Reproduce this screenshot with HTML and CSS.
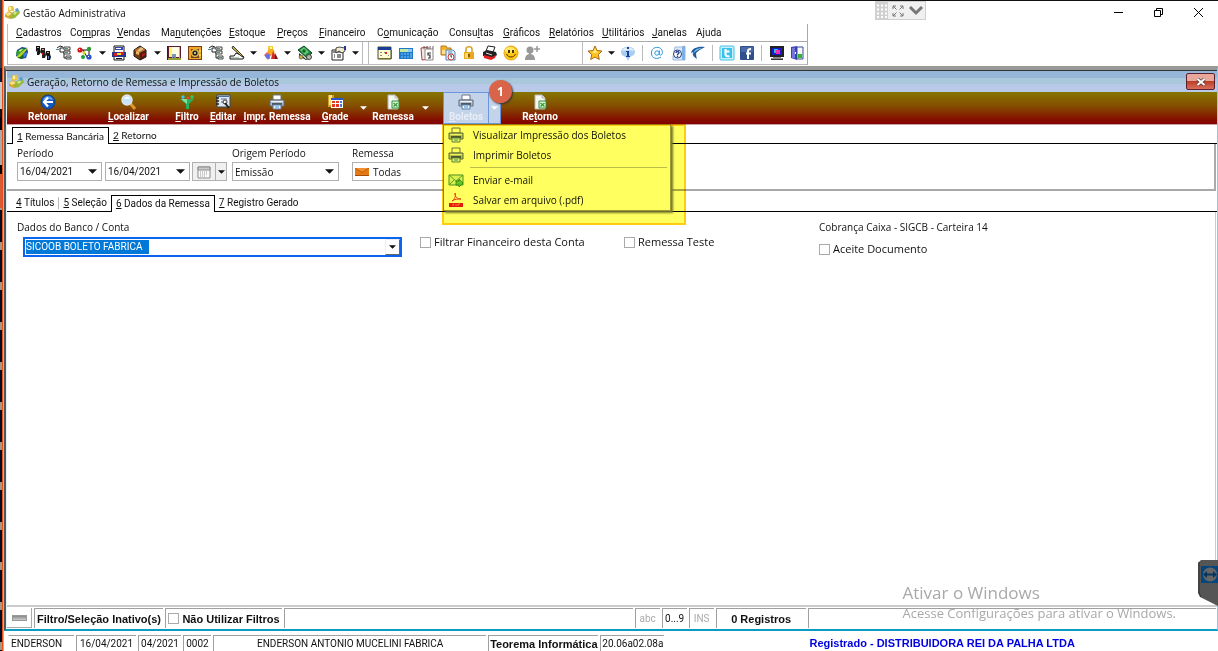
FILE: index.html
```html
<!DOCTYPE html>
<html lang="pt-BR">
<head>
<meta charset="utf-8">
<title>Gestão Administrativa</title>
<link rel="stylesheet" href="styles.css">
</head>
<body>
<svg class="sprite" aria-hidden="true">
  <symbol id="logo" viewBox="0 0 16 16"><path d="M5 1h4l1 2v3H4V3z" fill="#e8c648"/><path d="M5 2h2v3H5z" fill="#fff3b0"/><path d="M1 9l4-3 4 2 1 4-4 2-5-2z" fill="#d9a62b"/><path d="M1 9l4-2 3 2-4 2z" fill="#f8e08a"/><path d="M6 11l3-4 6-2 1 3-5 5-4 1z" fill="#9ab83a"/><path d="M9 8l5-2-3 4z" fill="#d8ec8c"/><path d="M11 4l3-1 1 3-3 1z" fill="#5c9ec8"/></symbol>
  <symbol id="down" viewBox="0 0 8 4"><path d="M0 0h8L4 4z" fill="currentColor"/></symbol>
  <symbol id="globe" viewBox="0 0 16 16"><path d="M3 5l5-3 5 1 1 4-2 6-5 1-5-3z" fill="#123c96"/><path d="M2 7l6-4 5 2-5 4-5 2z" fill="#34a02c"/><path d="M3 11l5-3 4 2-4 4-4-1z" fill="#1c6b2c"/><path d="M2 12l8-7 4-3-3 5-5 5z" fill="#b6d82a"/><path d="M9 9l4-2v3l-3 3z" fill="#3f7be0"/><path d="M5 5l4-1-3 3z" fill="#e7f7a8"/></symbol>
  <symbol id="people" viewBox="0 0 16 16"><path d="M1 1h4v3l1 3-2 3H2V7L1 6z" fill="#111"/><path d="M6 3h4v3l1 4-1 3H7V9L6 8z" fill="#222"/><path d="M11 6h4v3l1 3-1 3h-3v-4l-1-1z" fill="#111"/><path d="M2 2h2v1H2zM7 4h2v1H7zM12 7h2v1h-2z" fill="#d9a78a"/><path d="M2 5h1v2H2zM7 8h1v2H7z" fill="#c01414"/><path d="M13 11h1v3h-1z" fill="#5b79c4"/></symbol>
  <symbol id="tree" viewBox="0 0 16 16"><path d="M1 3l3-2 3 1M4 3v4h4M8 7v6h3M4 3h4" fill="none" stroke="#222"/><path d="M8 2h6v3H8zM8 6h6v3H8zM10 11h5v3h-5z" fill="#f1f1df" stroke="#333" stroke-width=".9"/><path d="M0 4h3v1H0zM9 3h3v1H9zM9 7h3v1H9zM11 12h3v1h-3z" fill="#4c8a9a"/></symbol>
  <symbol id="flow" viewBox="0 0 16 16"><path d="M3 5h9M6 5l4 7M10 12h3M12 5v5" fill="none" stroke="#111"/><circle cx="3" cy="5" r="2.600" fill="#d81818"/><circle cx="12" cy="4" r="2.200" fill="#2c9c30"/><circle cx="7" cy="8" r="1.700" fill="#dbd024"/><circle cx="12" cy="12" r="2.600" fill="#2d52d0"/><circle cx="6" cy="12" r="2" fill="#159f35"/><path d="M2 4h1v1H2zM11 11h1v1h-1z" fill="#fff"/></symbol>
  <symbol id="calc" viewBox="0 0 16 16"><path d="M3 1h10v14H3z" fill="#fff" stroke="#111"/><path d="M4 2h8v3H4z" fill="#3a48ad"/><path d="M5 3h5v1H5z" fill="#fff"/><path d="M1 7h14v5H1z" fill="#2a3590"/><path d="M3 8h3v3H3zM9 7h4v3H9z" fill="#d32020"/><path d="M6 8h4v2H6z" fill="#f5e22d"/><path d="M5 13h6v1H5z" fill="#111"/></symbol>
  <symbol id="box" viewBox="0 0 16 16"><path d="M2 5l6-4 6 4v7l-6 3-6-4z" fill="#7a3b13" stroke="#111"/><path d="M2 5l6-3 6 3-6 3z" fill="#b86a28"/><path d="M8 8l6-3v6l-6 4z" fill="#4b1e0b"/><path d="M4 6l3 1v3L4 9z" fill="#f0b45c"/><path d="M9 2l3 2-5 3-2-1z" fill="#e4c083"/><path d="M10 9l3-1v2l-3 2z" fill="#b01a1a"/></symbol>
  <symbol id="book" viewBox="0 0 16 16"><path d="M1 1h14v14H1z" fill="#5d1a3a"/><path d="M3 2h3v10H3z" fill="#fff36a"/><path d="M6 2h7v10H6z" fill="#fffde0"/><path d="M1 13h14v2H1z" fill="#94a030"/><path d="M1 1h1v14H1z" fill="#222"/><path d="M6 9h4v5L8 12l-2 2z" fill="#7c95bb"/><path d="M13 2h1v11h-1z" fill="#b5c060"/></symbol>
  <symbol id="safe" viewBox="0 0 16 16"><path d="M1 1h14v14H1z" fill="#7a3a1c"/><path d="M2 2h12v12H2z" fill="#f0a820"/><path d="M4 4h8v9H4z" fill="#6a4420"/><circle cx="8" cy="8" r="4" fill="#e9ba45"/><circle cx="8" cy="8" r="2.600" fill="#222"/><circle cx="8" cy="8" r="1" fill="#f7e7b0"/><path d="M12 5h2v2h-2zM12 9h2v2h-2z" fill="#f5d33e"/></symbol>
  <symbol id="sign" viewBox="0 0 16 16"><path d="M1 11h4l2-3 5 2 3 2-1 2H1z" fill="#fff" stroke="#111"/><path d="M4 1l9 9 1 2-2-1-9-8z" fill="#d1b54f" stroke="#111" stroke-width=".8"/><path d="M2 13h8" stroke="#79986a"/></symbol>
  <symbol id="shapes" viewBox="0 0 16 16"><path d="M5 1h5v5H5z" fill="#f3cf30"/><circle cx="8" cy="7" r="3.500" fill="#f6ad24"/><path d="M10 6l4 8H8z" fill="#d22727"/><path d="M1 10l3-3 4 3-3 5z" fill="#e46a65"/><path d="M2 10l4-1 1 5-4-1z" fill="#5a76e2"/><path d="M12 8l3 6h-3z" fill="#6b1414"/><path d="M7 2h2v2H7z" fill="#fff4ad"/></symbol>
  <symbol id="money" viewBox="0 0 16 16"><path d="M1 5l6-4 8 7-5 5z" fill="#1c8338" stroke="#0b4820"/><path d="M3 5l4-3 5 5-4 3z" fill="#5fca76"/><circle cx="7" cy="6" r="1.700" fill="#116427"/><path d="M2 8l7 6 5-3v2l-5 2-7-4z" fill="#123b25"/><circle cx="12" cy="12" r="2.500" fill="#b6b8b0" stroke="#444"/><circle cx="4" cy="12" r="2" fill="#c9b13b" stroke="#444" stroke-width=".6"/></symbol>
  <symbol id="prop" viewBox="0 0 16 16"><path d="M1 5h11v10H1z" fill="#fff" stroke="#222"/><path d="M2 6h9v2H2z" fill="#888"/><path d="M3 10h1M3 12h1M6 10h4M6 12h4" stroke="#111"/><path d="M5 3l3-1 6 1v3l-3 2-3-2-3 2z" fill="#f4ecd2" stroke="#222" stroke-width=".8"/><path d="M13 1h2v4h-2z" fill="#24389c"/></symbol>
  <symbol id="agenda" viewBox="0 0 16 16"><path d="M1 2h13v12H1z" fill="#fffbd0" stroke="#4c4926"/><path d="M1 2h13v3H1z" fill="#1c3e92"/><path d="M3 7h2v1H3zM7 7h2v1H7zM3 10h2v1H3zM11 10h1v1h-1z" fill="#888"/><path d="M8 7h2v2H8z" fill="#d42828"/><path d="M2 13h13v1H2zM14 5h1v9h-1z" fill="#706c27"/></symbol>
  <symbol id="calc2" viewBox="0 0 16 16"><path d="M1 3h14v11H1z" fill="#1d79c9"/><path d="M2 4h12v3H2z" fill="#c3e6a3"/><path d="M10 4h4v3h-4z" fill="#8fcbef"/><path d="M3 8h2v2H3zM6 8h2v2H6zM9 8h2v2H9zM3 11h2v2H3zM6 11h2v2H6zM9 11h2v2H9zM12 8h2v5h-2z" fill="#4ca0e4"/></symbol>
  <symbol id="notes" viewBox="0 0 16 16"><path d="M2 3l7-1 1 12-7 1z" fill="#f5e8e4" stroke="#a8433c"/><path d="M6 4h8v11H6z" fill="#fff" stroke="#888"/><path d="M5 1v3M8 1v3M11 1v3M14 1v3" stroke="#666"/><path d="M12 8H9v2h2v3H9" fill="none" stroke="#333" stroke-width="1.200"/></symbol>
  <symbol id="sched" viewBox="0 0 16 16"><path d="M1 1h5l1 2h4v7H1z" fill="#f3b42b" stroke="#b67b14"/><path d="M2 5h9v4H2z" fill="#ffe08a"/><path d="M6 5h7l2 2v8H6z" fill="#e6effb" stroke="#5a84bb"/><path d="M8 7h4M8 9h5" stroke="#5a84bb"/><circle cx="11" cy="12" r="3" fill="#fff" stroke="#d43b2b"/><path d="M11 10v2h1" fill="none" stroke="#333"/></symbol>
  <symbol id="lock" viewBox="0 0 16 16"><path d="M5 8V4c0-3 6-3 6 0v4" fill="none" stroke="#d6a42c" stroke-width="1.600"/><path d="M3 7h10v7H3z" fill="#e9a91d"/><path d="M4 8h3v5H4z" fill="#fbdc72"/><path d="M7 9h2v3H7z" fill="#8c5b0f"/></symbol>
  <symbol id="print3" viewBox="0 0 16 16"><path d="M6 1l7 1-2 5-7-1z" fill="#fff" stroke="#222"/><path d="M1 7l4-2 9 2 1 3-5 4-9-3z" fill="#222"/><path d="M2 10l8 2 4-2-1 3-4 2-7-2z" fill="#e32020"/><path d="M4 8l6 2" stroke="#ddd"/></symbol>
  <symbol id="smile" viewBox="0 0 16 16"><circle cx="8" cy="8" r="7" fill="#fdc912" stroke="#e9a514"/><ellipse cx="7" cy="5" rx="5" ry="3" fill="#ffe868"/><path d="M5 5h2v3H5zM9 5h2v3H9z" fill="#4b2c07"/><path d="M3.500 9c1.500 4 7.500 4 9 0" fill="none" stroke="#4b2c07"/></symbol>
  <symbol id="adduser" viewBox="0 0 16 16"><circle cx="6" cy="5" r="3.500" fill="#999"/><path d="M1 15c0-4 2-6 5-6s5 2 5 6z" fill="#999"/><path d="M5 8h2v2H5z" fill="#999"/><path d="M13 1v6M10 4h6" stroke="#999" stroke-width="1.500"/></symbol>
  <symbol id="star" viewBox="0 0 16 16"><path d="M8 1l2 4.500 5 .6-3.700 3.400 1 5L8 12l-4.300 2.500 1-5L1 6.100l5-.6z" fill="#ffc421" stroke="#a66a11"/><path d="M8 3l1.200 3.500L12 7 8 8 4 7l3-.7z" fill="#fff087"/></symbol>
  <symbol id="info" viewBox="0 0 16 16"><path d="M1 7c0-7 14-7 14 0 0 3-3 4-5 5l-2 4-2-4C3 11 1 10 1 7z" fill="#a9cdf0"/><path d="M2 6c2-5 10-5 12 0-3-1-8-1-12 0z" fill="#e2effb"/><path d="M7 2h2v2H7zM6 6h3v5h1v1H6v-1h1V7H6z" fill="#12439c"/></symbol>
  <symbol id="at" viewBox="0 0 16 16"><circle cx="8" cy="8" r="2.200" fill="none" stroke="#2c9add"/><path d="M10.400 5.500v3.500c0 2 3 1.500 3-1.500 0-7-11-7-11 .5 0 6 6 6.500 9.600 4" fill="none" stroke="#2c9add"/></symbol>
  <symbol id="help" viewBox="0 0 16 16"><path d="M5 2h6l4-1v14H3v-3z" fill="#dce8f7" stroke="#9db7dc"/><path d="M12 2l3-1v14h-3z" fill="#7fb0e4"/><circle cx="7.500" cy="9" r="4" fill="#fff" stroke="#233f84"/><path d="M6 8c0-2 3.500-2 3 0l-1.500 1.500v1M7.500 11v1" fill="none" stroke="#233f84" stroke-width="1.300"/></symbol>
  <symbol id="feather" viewBox="0 0 16 16"><path d="M15 2C8 1 2 3 1 8l2-1c-1 3 1 5 4 7-2-6 0-8 8-12z" fill="#1f5c9c"/><path d="M12 3C7 3 4 5 3 9c2-3 5-4 9-6z" fill="#7fc4ea"/><path d="M6 8l3-2-2 5z" fill="#fff"/></symbol>
  <symbol id="twitter" viewBox="0 0 16 16"><rect x="1" y="1" width="14" height="14" rx="1" fill="#c9effa" stroke="#41c4e8"/><path d="M3 3h10v10H3z" fill="#39c3ec"/><path d="M6.500 4v5c0 2 1 2.500 4 2.500M6.500 6.500h4" fill="none" stroke="#fff" stroke-width="2.200"/></symbol>
  <symbol id="facebook" viewBox="0 0 16 16"><rect x="1" y="1" width="14" height="14" rx="1" fill="#2f4f8d"/><path d="M2 2h12v5H2z" fill="#4a6aa8"/><path d="M9 14V6c0-1.500 1-2 3-2M7 8.500h5" fill="none" stroke="#fff" stroke-width="2"/></symbol>
  <symbol id="monitor" viewBox="0 0 16 16"><path d="M1 1h14v11H1z" fill="#222"/><path d="M3 3h10v7H3z" fill="#1b18c9"/><path d="M5 4h4v4H5z" fill="#29b8ea"/><path d="M7 5h4v4H7z" fill="#f02cb1"/><path d="M4 12h8v1H4zM2 13h12v2H2z" fill="#888"/><path d="M2 14h12v1H2z" fill="#333"/></symbol>
  <symbol id="door" viewBox="0 0 16 16"><path d="M2 2l6-1v14l-6-2z" fill="#3a3fb4"/><path d="M3 3l3-.5v11L3 13z" fill="#7478dd"/><path d="M8 2h6v12H8z" fill="#f6f6f6" stroke="#3d4b9b"/><path d="M9 9h4v4H9z" fill="#2fb82d"/><path d="M6 7h1v2H6z" fill="#fff"/></symbol>
  <symbol id="back" viewBox="0 0 16 16"><circle cx="8" cy="8" r="7" fill="#1458c4" stroke="#0a3b8c"/><path d="M3 6c1-5 9-5 10 0-3-1-7-1-10 0z" fill="#5c9eee"/><path d="M8 3.500L4 8l4 4.500M4.500 8H13" fill="none" stroke="#fff" stroke-width="2.200"/></symbol>
  <symbol id="search" viewBox="0 0 16 16"><path d="M9 9l5 6" stroke="#d99a2f" stroke-width="3"/><circle cx="6" cy="6" r="5" fill="#c7e3fb" stroke="#dfe6ee" stroke-width="1.500"/><path d="M3 5c1-3 5-3 6 0-2-.5-4-.5-6 0z" fill="#fff"/></symbol>
  <symbol id="funnel" viewBox="0 0 16 16"><path d="M1 5h14l-5 5v5H7v-5z" fill="#28b15a"/><path d="M2 5h6v5z" fill="#7fe3a0"/><circle cx="4" cy="3" r="1.700" fill="#36c9e8"/><circle cx="9" cy="4" r="1.500" fill="#e5493a"/><circle cx="13" cy="3" r="1.700" fill="#39c46c"/></symbol>
  <symbol id="edit" viewBox="0 0 16 16"><path d="M2 1h13v12H2z" fill="#dfe7f2" stroke="#35435a"/><path d="M3 2h11v1H3z" fill="#4d6fa6"/><path d="M1 4h3M1 7h3M1 10h3" stroke="#222" stroke-width="1.500"/><path d="M6 5h6M6 8h3" stroke="#61718c"/><circle cx="10" cy="8" r="2" fill="#fff" stroke="#333"/><path d="M10 9l4 5" stroke="#222" stroke-width="2"/></symbol>
  <symbol id="printer" viewBox="0 0 16 16"><path d="M4 1h8v5H4z" fill="#fff" stroke="#6a7584"/><path d="M1 6h14v6H1z" fill="#b4bfce" stroke="#5c6a7c"/><path d="M2 7h12v1H2z" fill="#eef2f7"/><path d="M3 9h10v2H3z" fill="#4d5866"/><path d="M4 11h8v4H4z" fill="#eaf4ff" stroke="#5a7fa8"/><path d="M6 13h4" stroke="#3b8fd8"/></symbol>
  <symbol id="grid" viewBox="0 0 16 16"><path d="M1 1h6v12H1z" fill="#d7a129"/><path d="M2 1h3v10H2z" fill="#ffe08a"/><path d="M4 5h12v9H4z" fill="#fff"/><path d="M4 4h12v2H4z" fill="#2c55c9"/><path d="M5 7h3v2H5zM9 7h3v2H9zM5 10h3v3H5zM9 10h3v3H9z" fill="#e33a22"/><path d="M13 7h2v2h-2zM13 10h2v3h-2z" fill="#4979df"/></symbol>
  <symbol id="sheet" viewBox="0 0 16 16"><path d="M3 1h7l3 3v11H3z" fill="#f5f7f5" stroke="#b4bcb4"/><path d="M10 1v3h3" fill="#d4dbd4" stroke="#b4bcb4"/><path d="M7 7h7v7H7z" fill="#e5f6dd" stroke="#2e8f33"/><path d="M8.500 9l4 3.500M12.500 9l-4 3.500" stroke="#35a03b" stroke-width="1.400"/></symbol>
  <symbol id="mail" viewBox="0 0 16 16"><path d="M1 3h14v10H1z" fill="#d9efd2" stroke="#4b8f4a"/><path d="M1 3l7 6 7-6M1 13l5-5M15 13l-5-5" fill="none" stroke="#5fa35d"/><path d="M8 9h3V7l4 4-4 4v-2H8z" fill="#66c54f" stroke="#217a1a" stroke-width=".7"/></symbol>
  <symbol id="pdf" viewBox="0 0 16 16"><path d="M2 1h12v14H2z" fill="#fff"/><path d="M1 11h14v4H1z" fill="#e01b1b"/><path d="M4 9c3-2 4-5 3-8 0 4 2 6 6 6-4 0-6 0-9 2z" fill="none" stroke="#e43b2c"/><path d="M5 12v2M5 12h1M8 12v2M10 12v2M10 12h2" stroke="#f99" stroke-width=".8"/></symbol>
  <symbol id="envelope" viewBox="0 0 14 8"><path d="M0 0h14v8H0z" fill="#e57a12"/><path d="M0 0h14L7 4z" fill="#f09030"/><path d="M0 7h14v1H0z" fill="#a84d08"/><path d="M0 0l7 4.500L14 0" fill="none" stroke="#b5590c" stroke-width=".8"/></symbol>
  <symbol id="calendar" viewBox="0 0 14 14"><path d="M1 2h12v11H1z" fill="#fafafa" stroke="#8c8c8c"/><path d="M1 2h12v3H1z" fill="#c9c9c9" stroke="#8c8c8c"/><path d="M3 7h8M3 9h8M3 11h6" stroke="#999" stroke-dasharray="1 1"/></symbol>
</svg>

<div class="edge" aria-hidden="true"></div>

<div class="app">
  <header class="titlebar">
    <svg class="i16"><use href="#logo"/></svg>
    <h1>Gestão Administrativa</h1>
    <div class="remote">
      <svg class="dots" width="13" height="17" viewBox="0 0 13 17"><path d="M0 0h13v17H0z" fill="#d0d0d0"/><path d="M2 3.500h11M2 7.500h11M2 11.500h11M2 15h11" stroke="#fff" stroke-width="2" stroke-dasharray="2 2"/></svg>
      <svg width="12" height="12" viewBox="0 0 12 12"><path d="M1 4V1h3M8 1h3v3M11 8v3H8M4 11H1V8M1 1l3.500 3.500M11 1L7.500 4.500M11 11L7.500 7.500M1 11l3.500-3.500" fill="none" stroke="#777"/></svg>
      <svg width="16" height="10" viewBox="0 0 16 10"><path d="M2 1l6 6 6-6" fill="none" stroke="#777" stroke-width="3"/></svg>
    </div>
    <div class="winbtns">
      <button aria-label="Minimizar"><svg width="11" height="11" viewBox="0 0 11 11"><path d="M1 5.500h9" stroke="#000"/></svg></button>
      <button aria-label="Restaurar"><svg width="11" height="11" viewBox="0 0 11 11"><path d="M1.500 3.500h6v6h-6zM3.500 3.500v-2h6v6h-2" fill="none" stroke="#000"/></svg></button>
      <button aria-label="Fechar"><svg width="11" height="11" viewBox="0 0 11 11"><path d="M1 1l9 9M10 1l-9 9" stroke="#000"/></svg></button>
    </div>
  </header>

  <div class="bars">
    <nav class="menubar">
      <button><u>C</u>adastros</button><button>Co<u>m</u>pras</button><button><u>V</u>endas</button><button>Ma<u>n</u>utenções</button><button><u>E</u>stoque</button><button><u>P</u>reços</button><button><u>F</u>inanceiro</button><button>C<u>o</u>municação</button><button>Consu<u>l</u>tas</button><button><u>G</u>ráficos</button><button><u>R</u>elatórios</button><button><u>U</u>tilitários</button><button><u>J</u>anelas</button><button>A<u>j</u>uda</button>
    </nav>
    <div class="iconbar">
      <div class="group main">
        <button aria-label="Globo"><svg><use href="#globe"/></svg></button>
        <button aria-label="Clientes"><svg><use href="#people"/></svg></button>
        <button aria-label="Estrutura"><svg><use href="#tree"/></svg></button>
        <button aria-label="Fluxo"><svg><use href="#flow"/></svg></button>
        <button class="drop" aria-label="Mais"><svg><use href="#down"/></svg></button>
        <button aria-label="Caixa"><svg><use href="#calc"/></svg></button>
        <button aria-label="Produtos"><svg><use href="#box"/></svg></button>
        <button class="drop" aria-label="Mais"><svg><use href="#down"/></svg></button>
        <button aria-label="Livro"><svg><use href="#book"/></svg></button>
        <button aria-label="Cofre"><svg><use href="#safe"/></svg></button>
        <button aria-label="Plano"><svg><use href="#tree"/></svg></button>
        <button aria-label="Assinar"><svg><use href="#sign"/></svg></button>
        <button class="drop" aria-label="Mais"><svg><use href="#down"/></svg></button>
        <button aria-label="Itens"><svg><use href="#shapes"/></svg></button>
        <button class="drop" aria-label="Mais"><svg><use href="#down"/></svg></button>
        <button aria-label="Dinheiro"><svg><use href="#money"/></svg></button>
        <button class="drop" aria-label="Mais"><svg><use href="#down"/></svg></button>
        <button aria-label="Propriedades"><svg><use href="#prop"/></svg></button>
        <button class="drop" aria-label="Mais"><svg><use href="#down"/></svg></button>
      </div>
      <div class="group tools">
        <button aria-label="Agenda"><svg><use href="#agenda"/></svg></button>
        <button aria-label="Calculadora"><svg><use href="#calc2"/></svg></button>
        <button aria-label="Notas"><svg><use href="#notes"/></svg></button>
        <button aria-label="Tarefas"><svg><use href="#sched"/></svg></button>
        <button aria-label="Bloquear"><svg><use href="#lock"/></svg></button>
        <button aria-label="Imprimir"><svg><use href="#print3"/></svg></button>
        <button aria-label="Humor"><svg><use href="#smile"/></svg></button>
        <button aria-label="Novo usuário"><svg><use href="#adduser"/></svg></button>
      </div>
      <div class="group links">
        <button aria-label="Favoritos"><svg><use href="#star"/></svg></button>
        <button class="drop" aria-label="Mais"><svg><use href="#down"/></svg></button>
        <button aria-label="Informação"><svg><use href="#info"/></svg></button>
        <i></i>
        <button aria-label="E-mail"><svg><use href="#at"/></svg></button>
        <button aria-label="Ajuda"><svg><use href="#help"/></svg></button>
        <button aria-label="Site"><svg><use href="#feather"/></svg></button>
        <i></i>
        <button aria-label="Twitter"><svg><use href="#twitter"/></svg></button>
        <button aria-label="Facebook"><svg><use href="#facebook"/></svg></button>
        <i></i>
        <button aria-label="Monitor"><svg><use href="#monitor"/></svg></button>
        <button aria-label="Sair"><svg><use href="#door"/></svg></button>
      </div>
    </div>
  </div>

  <main class="child">
    <header class="childtitle">
      <svg class="i16"><use href="#logo"/></svg>
      <h2>Geração, Retorno de Remessa e Impressão de Boletos</h2>
      <button class="close" aria-label="Fechar janela"><svg width="10" height="8" viewBox="0 0 10 8"><path d="M1.500 1l7 6M8.500 1l-7 6" stroke="#533" stroke-width="3.400"/><path d="M1.500 1l7 6M8.500 1l-7 6" stroke="#fff" stroke-width="2"/></svg></button>
    </header>

    <div class="actions">
      <button class="w80"><svg><use href="#back"/></svg>Retornar</button>
      <button class="w80"><svg><use href="#search"/></svg><span><u>L</u>ocalizar</span></button>
      <button class="w36"><svg><use href="#funnel"/></svg><span><u>F</u>iltro</span></button>
      <button class="w36"><svg><use href="#edit"/></svg><span><u>E</u>ditar</span></button>
      <button class="w72"><svg><use href="#printer"/></svg><span><u>I</u>mpr. Remessa</span></button>
      <button class="w44"><svg><use href="#grid"/></svg><span><u>G</u>rade</span></button>
      <button class="drop" aria-label="Opções da grade"><svg><use href="#down"/></svg></button>
      <button class="w48"><svg><use href="#sheet"/></svg>Remessa</button>
      <button class="drop wide" aria-label="Opções da remessa"><svg><use href="#down"/></svg></button>
      <div class="split">
        <button class="w44"><svg><use href="#printer"/></svg><span><u>B</u>oletos</span></button>
        <button class="drop" aria-label="Opções de boletos"><svg><use href="#down"/></svg></button>
        <div class="menu" role="menu">
          <button role="menuitem"><svg><use href="#printer"/></svg>Visualizar Impressão dos Boletos</button>
          <button role="menuitem"><svg><use href="#printer"/></svg>Imprimir Boletos</button>
          <hr>
          <button role="menuitem"><svg><use href="#mail"/></svg>Enviar e-mail</button>
          <button role="menuitem"><svg><use href="#pdf"/></svg>Salvar em arquivo (.pdf)</button>
        </div>
        <div class="marker"></div>
        <span class="badge">1</span>
      </div>
      <button class="w48"><svg><use href="#sheet"/></svg><span>Re<u>t</u>orno</span></button>
    </div>

    <div class="tabs top">
      <button class="on"><u>1</u> Remessa Bancária</button><button><u>2</u> Retorno</button>
    </div>

    <section class="filters">
      <div class="field period">
        <label for="d1">Período</label>
        <div class="row">
          <div class="combo date"><input id="d1" value="16/04/2021"><svg><use href="#down"/></svg></div>
          <div class="combo date"><input aria-label="Período final" value="16/04/2021"><svg><use href="#down"/></svg></div>
          <div class="calbtn"><button aria-label="Calendário"><svg width="14" height="14"><use href="#calendar"/></svg></button><button class="drop" aria-label="Períodos"><svg><use href="#down"/></svg></button></div>
        </div>
      </div>
      <div class="field origin">
        <label for="org">Origem Período</label>
        <div class="combo"><select id="org"><option>Emissão</option></select><svg><use href="#down"/></svg></div>
      </div>
      <div class="field ship">
        <label for="rem">Remessa</label>
        <div class="combo"><svg class="env"><use href="#envelope"/></svg><select id="rem"><option>Todas</option></select></div>
      </div>
    </section>

    <div class="tabs sub">
      <button><u>4</u> Títulos</button><button class="bar"><u>5</u> Seleção</button><button class="on"><u>6</u> Dados da Remessa</button><button><u>7</u> Registro Gerado</button>
    </div>

    <section class="page">
      <div class="bank">
        <label for="bk">Dados do Banco / Conta</label>
        <div class="bankbox"><input id="bk" value="SICOOB BOLETO FABRICA"><button aria-label="Abrir lista"><svg><use href="#down"/></svg></button></div>
      </div>
      <label class="check c2"><input type="checkbox">Filtrar Financeiro desta Conta</label>
      <label class="check c3"><input type="checkbox">Remessa Teste</label>
      <div class="caixa">
        <p>Cobrança Caixa - SIGCB - Carteira 14</p>
        <label class="check"><input type="checkbox">Aceite Documento</label>
      </div>
    </section>

    <footer class="status">
      <span class="face"><i></i></span>
      <span class="cell strong s130">Filtro/Seleção Inativo(s)</span>
      <label class="cell strong check s118"><input type="checkbox">Não Utilizar Filtros</label>
      <span class="cell fill3"></span>
      <span class="cell dim s24">abc</span>
      <span class="cell s24">0...9</span>
      <span class="cell dim s24">INS</span>
      <span class="cell strong s90">0 Registros</span>
      <span class="cell fill4"></span>
    </footer>
  </main>

  <footer class="appstatus">
    <span class="cell s68">ENDERSON</span>
    <span class="cell s60">16/04/2021</span>
    <span class="cell s44">04/2021</span>
    <span class="cell s28">0002</span>
    <span class="cell user">ENDERSON ANTONIO MUCELINI FABRICA</span>
    <span class="cell strong s110">Teorema Informática</span>
    <span class="cell s64">20.06a02.08a</span>
    <span class="reg">Registrado - DISTRIBUIDORA REI DA PALHA LTDA</span>
  </footer>
</div>

<div class="watermark"><strong>Ativar o Windows</strong><span>Acesse Configurações para ativar o Windows.</span></div>
<div class="viewer"><svg width="20" height="46" viewBox="0 0 20 46"><path d="M3 0h17v46L8 40l-6-3-2-4V3z" fill="#555"/><path d="M1 2v31l2 4" fill="none" stroke="#333"/><path d="M3 6h17v17H3z" fill="#06447c"/><circle cx="12" cy="14.500" r="7" fill="#666"/><path d="M8 14.500h8" stroke="#06345f" stroke-width="2"/><path d="M9 11l-4 3.500L9 18zM15 11l4 3.500-4 3.500z" fill="#06345f"/></svg></div>
</body>
</html>
```
FILE: styles.css
```css
* { box-sizing: border-box; }
body {
  margin: 0;
  min-height: 100vh;
  display: grid;
  grid-template-columns: 4px 1fr;
  background: #fff;
  color: #111;
  font: 10px/14px "Open Sans", "Noto Sans", sans-serif;
}
button, input, select { font: inherit; color: inherit; border: 0; padding: 0; margin: 0; background: none; border-radius: 0; }
h1, h2, p { margin: 0; font-size: 10px; font-weight: 400; }
svg { display: block; flex: none; }
u { text-underline-offset: 1px; text-decoration-thickness: 1px; }
.sprite { position: absolute; width: 0; height: 0; }
.i16 { width: 16px; height: 16px; }

.edge {
  border-right: 1px solid #f4a27a;
  background:
    linear-gradient(90deg, transparent 2px, #e8501a 2px),
    linear-gradient(#3a3d46 0 68px, #061a3c 68px 82px, #c9c9c9 82px 109px, #111 109px 118px, #001 118px 130px, #aaa 130px 165px, #000 165px 174px, #d85a3a 174px 208px, transparent 208px),
    repeating-linear-gradient(#000c24 0 2px, #a89a80 2px 10px, #000c24 10px 40px);
}
.app { display: flex; flex-direction: column; min-height: 100vh; min-width: 0; }

.titlebar {
  display: flex; align-items: center; gap: 3px;
  height: 24px; padding-left: 0;
  border-top: 1px solid #111;
}
.titlebar h1 { flex: 1; }
.remote {
  display: flex; align-items: center; gap: 4px;
  align-self: flex-start; height: 19px; width: 51px; margin-right: 169px;
  background: #f0f0f0; border: 1px solid #d0d0d0; border-left: 0;
}
.winbtns { display: flex; }
.winbtns button { width: 40px; height: 20px; display: grid; place-items: center; }

.bars { width: 804px; border-right: 1px solid #aaa; }
.menubar {
  display: grid; align-items: center;
  grid-template-columns: 54px 47px 44px 68px 48px 42px 58px 72px 54px 46px 53px 50px 44px 1fr;
  height: 18px; margin-left: 3px; padding-left: 8px;
  border-left: 1px solid #bbb; border-bottom: 1px solid #aaa;
  font-family: Roboto, sans-serif;
}
.menubar button { text-align: left; }
.iconbar { display: flex; height: 23px; border-bottom: 1px solid #bbb; margin-left: 3px; }
.group { display: flex; align-items: center; border-left: 1px solid #bbb; }
.group button { width: 21px; height: 20px; display: grid; place-items: center; }
.group button svg { width: 16px; height: 16px; }
.group .drop { width: 13px; }
.group .drop svg { width: 7px; height: 4px; }
.group i { width: 1px; height: 16px; margin: 0 4px; background: #bbb; }
.main { width: 356px; padding-left: 4px; border-right: 1px solid #bbb; }
.tools { flex: 1; margin-left: 5px; padding-left: 5px; }
.links { width: 225px; padding-left: 2px; }

.child {
  flex: 1; display: flex; flex-direction: column;
  margin-top: 1px; padding-left: 1px;
  border: solid #555; border-width: 4px 1px 2px 2px;
  border-color: #999 #7fd0f0 #0a9cc4 #555;
  box-shadow: inset 0 1px #333, inset 1px 0 #e4f2f6;
}
.childtitle {
  display: flex; align-items: center; gap: 3px; height: 21px; margin-top: 1px; padding: 0 2px 0 1px;
  background: linear-gradient(#96b6d9 0 7px, #a9c8dc 7px 13px, #b9c9ea 13px);
}
.childtitle h2 { flex: 1; }
.close {
  width: 29px; height: 17px; display: grid; place-items: center;
  border: 1px solid #5a2030; border-radius: 2px;
  background: linear-gradient(#e9a79c 0 45%, #b83a22 45%, #d9705c);
}

.actions {
  display: flex; height: 33px;
  background: linear-gradient(#867600, #844c00 45%, #840c00 88%, #840000);
  border-bottom: 1px solid #c8a0a0;
  color: #fff; font: bold 10px/12px Roboto, sans-serif;
}
.actions > button, .split > button {
  display: flex; flex-direction: column; align-items: center; justify-content: center; gap: 1px; white-space: nowrap;
}
.actions svg { width: 16px; height: 16px; }
.actions .drop svg { width: 7px; height: 4px; }
.w80 { width: 81px; }
.w36 { width: 36px; }
.w72 { width: 72px; }
.w44 { width: 44px; }
.w48 { width: 48px; }
.drop { width: 12px; }
.wide { width: 16px; }
.split { position: relative; display: flex; margin: 0 15px 0 10px; background: #c3d3ea; }
.split > button { border: 1px solid #6c96dc; color: #e8edf5; }
.split .drop { border-left: 0; color: #fff; }
.split > .w44 { width: 46px; }
.menu {
  position: absolute; z-index: 2; top: 100%; left: 0; width: 228px;
  background: #fff; border: 1px solid #999; box-shadow: 2px 2px 2px #777;
  color: #111; font: 10px/14px "Open Sans", sans-serif;
}
.menu button { display: flex; align-items: center; gap: 9px; width: 100%; height: 20px; padding-left: 4px; }
.menu hr { margin: 2px 3px 2px 26px; border: 0; border-top: 1px solid #bbb; }
.marker {
  position: absolute; z-index: 3; top: 100%; left: -1px; width: 244px; height: 101px;
  background: #ffff60; border: 2px solid #ffcc10; mix-blend-mode: multiply; pointer-events: none;
}
.badge {
  position: absolute; z-index: 4; top: -12px; left: 46px; width: 23px; height: 23px; border-radius: 50%;
  background: #d9644a; box-shadow: 1px 1px 2px #333; color: #fff; text-align: center; font: bold 12px/23px "Open Sans", sans-serif;
}

.tabs { display: flex; align-items: flex-end; border-bottom: 1px solid #000; font: 10px/14px Roboto, sans-serif; }
.tabs button { height: 16px; padding: 0 4px; white-space: nowrap; }
.tabs .on { height: 17px; margin-bottom: -1px; border: 1px solid #000; border-bottom: 0; background: #fff; }
.tabs .bar { border-left: 1px solid #bbb; height: 12px; line-height: 10px; margin-bottom: 2px; }
.top { height: 19px; padding-left: 5px; font-family: Lato, sans-serif; }
.sub { height: 21px; padding-left: 5px; }

.filters {
  display: flex; height: 47px; margin-right: 1px; padding: 2px 0 0 10px;
  border-right: 2px solid #aaa; border-bottom: 2px solid #a8a8a8;
}
.field { display: flex; flex-direction: column; gap: 2px; }
.row { display: flex; gap: 3px; }
.combo { display: flex; align-items: center; height: 19px; padding: 0 4px 0 2px; border: 1px solid #b0b0b0; background: #fff; }
.combo input, .combo select { flex: 1; min-width: 0; appearance: none; }
.combo > svg { width: 9px; height: 5px; }
.combo .env { width: 14px; height: 8px; margin-right: 4px; }
.date { width: 85px; font-family: Roboto, sans-serif; }
.calbtn { display: flex; height: 19px; margin-left: -1px; border: 1px solid #b0b0b0; background: #f0f0f0; }
.calbtn button { width: 22px; display: grid; place-items: center; }
.calbtn .drop { width: 11px; border-left: 1px solid #b0b0b0; }
.calbtn .drop svg { width: 7px; height: 4px; }
.period { width: 215px; }
.origin { width: 120px; }
.origin .combo { width: 107px; }
.ship { width: 110px; }

.page { flex: 1; display: flex; align-items: flex-start; padding: 8px 0 0 10px; margin-right: 1px; border-right: 1px solid #ccc; }
.bank { width: 403px; }
.bank label { display: block; }
.bankbox {
  display: flex; align-items: center; width: 379px; height: 20px; margin: 3px 0 0 6px; padding-left: 1px; border: 2px solid #0a64f0;
}
.bankbox input { width: 123px; height: 14px; background: #0078d7; color: #fff; font-family: Roboto, sans-serif; }
.bankbox button {
  width: 15px; height: 16px; margin-left: auto; display: grid; place-items: center;
  border: 1px solid #eee; border-right-color: #666; border-bottom-color: #666;
}
.bankbox svg { width: 7px; height: 4px; }
.check { display: flex; align-items: center; gap: 3px; white-space: nowrap; font-size: 11px; }
.check input { appearance: none; flex: none; width: 11px; height: 11px; border: 1px solid #aaa; background: #fff; }
.c2 { width: 204px; margin-top: 15px; }
.c3 { width: 195px; margin-top: 15px; }
.caixa .check { margin-top: 8px; }

.cell { display: flex; align-items: center; justify-content: center; border: solid #a0a0a0; border-width: 1px 0 0 1px; white-space: nowrap; overflow: hidden; }
.strong { font: bold 11px/14px "Liberation Sans", sans-serif; }
.status, .appstatus { display: flex; gap: 2px; font-family: Roboto, sans-serif; }
.status { height: 24px; padding: 1px 1px 1px 0; border-top: 2px solid #ccc; }
.face { width: 25px; display: grid; place-items: center; border-right: 1px solid #aaa; border-bottom: 1px solid #aaa; }
.face i { width: 15px; height: 6px; background: linear-gradient(#888, #ccc); border: 1px solid #999; }
.s130 { width: 129px; }
.s118 { width: 117px; }
.status .check { gap: 3px; }
.s24 { width: 25px; }
.s90 { width: 90px; }
.fill3 { flex: 349 1 0; }
.fill4 { flex: 409 1 0; }
.dim { color: #aaa; }

.appstatus { height: 20px; padding: 4px 0 0 4px; }
.s68 { width: 66px; justify-content: flex-start; padding-left: 2px; border-left-color: transparent; }
.s60 { width: 60px; }
.s44 { width: 43px; }
.s28 { width: 28px; }
.user { flex: 272 1 0; }
.s110 { width: 110px; }
.s64 { width: 64px; }
.reg { flex: 551 1 0; display: grid; place-items: center; color: #0000e0; font: bold 11px/14px "Liberation Sans", sans-serif; }

.watermark { position: absolute; right: 42px; bottom: 30px; display: grid; color: #a9a9a9; pointer-events: none; }
.watermark strong { font: 17px/24px "Open Sans", sans-serif; }
.watermark span { font-size: 13px; line-height: 16px; }
.viewer { position: absolute; right: 0; bottom: 45px; }
```
